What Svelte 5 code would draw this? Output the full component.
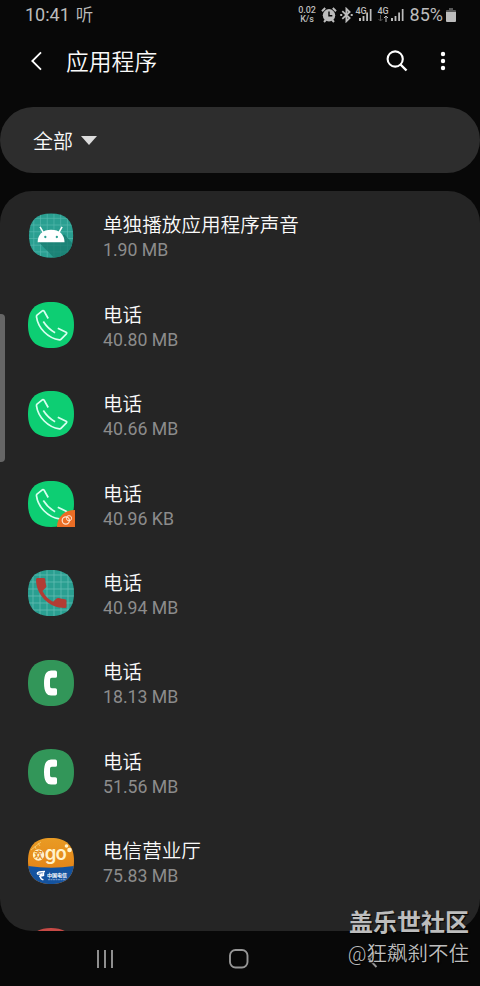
<script>
    const apps = [
        { name: '单独播放应用程序声音', size: '1.90 MB', icon: 'android' },
        { name: '电话', size: '40.80 MB', icon: 'phone' },
        { name: '电话', size: '40.66 MB', icon: 'phone' },
        { name: '电话', size: '40.96 KB', icon: 'phone-badge' },
        { name: '电话', size: '40.94 MB', icon: 'phone-grid' },
        { name: '电话', size: '18.13 MB', icon: 'handset' },
        { name: '电话', size: '51.56 MB', icon: 'handset' },
        { name: '电信营业厅', size: '75.83 MB', icon: 'telecom' },
        { name: '中国银行', size: '', icon: 'red' }
    ];

    const squircle = 'M23 0C38.5 0 46 7.5 46 23S38.5 46 23 46 0 38.5 0 23 7.5 0 23 0Z';
    const gridLines = [5, 12, 19, 26, 33, 40];
</script>

<svelte:head>
    <title>应用程序</title>
</svelte:head>

{#snippet signal()}
    <svg class="signal" width="13" height="13" viewBox="0 0 13 13">
        <path d="M0 10h2v3H0zM3.6 8h1.8v5H3.6zM7.2 4.5H9V13H7.2zM10.8 1h1.7v12h-1.7z" fill="#bcbcbc" />
    </svg>
{/snippet}

<div class="screen">
    <div class="status">
        <span class="time">10:41</span>
        <span class="listen">听</span>
        <div class="status-right">
            <div class="speed"><span>0.02</span><span>K/s</span></div>
            <svg class="alarm" width="16" height="16" viewBox="0 0 16 16">
                <circle cx="8" cy="8.3" r="6.2" fill="#bcbcbc" />
                <path d="M1 4.2 4.2 1M15 4.2 11.8 1M3 15l1.8-2M13 15l-1.8-2" stroke="#bcbcbc" stroke-width="2" />
                <path d="M8 4.5v4.2h3.3" fill="none" stroke="#080808" stroke-width="1.4" />
            </svg>
            <svg class="bluetooth" width="13" height="16" viewBox="0 0 13 16">
                <path d="M2.3 4.2 9.6 11 6.4 14.2V1.8L9.6 5 2.3 11.8" fill="none" stroke="#bcbcbc" stroke-width="1.8" />
                <path d="M.2 7h2v2h-2zM10.7 7h2v2h-2z" fill="#bcbcbc" />
            </svg>
            <div class="network">
                <span class="gen">4G</span>
                {@render signal()}
            </div>
            <div class="network second">
                <div class="data">
                    <span class="gen">4G</span>
                    <svg width="11" height="7" viewBox="0 0 11 7">
                        <path d="M2.5 0v6M.5 4l2 2 2-2" fill="none" stroke="#555" />
                        <path d="M8 7V1M6 3l2-2 2 2" fill="none" stroke="#bcbcbc" />
                    </svg>
                </div>
                {@render signal()}
            </div>
            <span class="percent">85%</span>
            <svg class="battery" width="10" height="14" viewBox="0 0 10 14">
                <path d="M3 0h4v2h2q1 0 1 1v2H0V3q0-1 1-1h2z" fill="#585858" />
                <path d="M0 4h10v9q0 1-1 1H1q-1 0-1-1z" fill="#bcbcbc" />
            </svg>
        </div>
    </div>

    <header>
        <svg class="back" width="12" height="20" viewBox="0 0 12 20">
            <path d="M11 1.3 2.3 10l8.7 8.7" fill="none" stroke="#fff" stroke-width="1.8" />
        </svg>
        <h1>应用程序</h1>
        <svg class="search" width="22" height="22" viewBox="0 0 22 22">
            <circle cx="9.2" cy="9" r="7.6" fill="none" stroke="#fff" stroke-width="2.1" />
            <path d="m14.5 14.5 6 6" stroke="#fff" stroke-width="2.4" />
        </svg>
        <svg class="more" width="6" height="20" viewBox="0 0 6 20">
            <circle cx="3" cy="3" r="2.2" fill="#fff" />
            <circle cx="3" cy="10" r="2.2" fill="#fff" />
            <circle cx="3" cy="17" r="2.2" fill="#fff" />
        </svg>
    </header>

    <div class="filter">
        <span>全部</span>
        <svg width="16" height="9" viewBox="0 0 16 9"><path d="M0 0h16L8 9z" fill="#dcdcdc" /></svg>
    </div>

    <main>
        {#each apps as app}
            <div class="row">
                <svg class="icon" width="48" height="46" viewBox="0 0 48 46">
                    {#if app.icon === 'android'}
                        <g transform="translate(1 .5) scale(.96)">
                            <path d={squircle} fill="#2a9f91" />
                            <clipPath id="android-clip"><path d={squircle} /></clipPath>
                            <g clip-path="url(#android-clip)">
                                {#each gridLines as n}
                                    <path d="M{n} 0v46M0 {n}h46" stroke="#57b9ae" stroke-width=".7" />
                                {/each}
                                <path d="M9 29 26 46h20V32L37 22z" fill="#17796d" opacity=".75" />
                            </g>
                            <path d="M9 30c0-8 5.3-13 14-13s14 5 14 13z" fill="#fff" />
                            <path d="m15 20-3.5-6M31 20l3.5-6" stroke="#fff" stroke-width="1.6" />
                            <circle cx="17" cy="24.5" r="1.2" fill="#2a9f91" />
                            <circle cx="29" cy="24.5" r="1.2" fill="#2a9f91" />
                        </g>
                    {:else if app.icon === 'phone' || app.icon === 'phone-badge'}
                        <path d={squircle} fill="#0dce73" />
                        <path
                            d="M20.2 16.5 16 9q-.7-.8-1.7-.2L9 13.2q-.6.6-.5 1.600C10 26 20 36.5 31.5 37.8q1 .1 1.700-.6l5.200-5.400q.8-1-.3-1.600l-8.300-4M15.300 19.500c3 4.700 6.800 8.500 11.800 11.200"
                            fill="none"
                            stroke="#d8fff0"
                            stroke-width="1.7"
                            stroke-linejoin="round"
                        />
                        {#if app.icon === 'phone-badge'}
                            <path d="M47 29v17H29c0-9.5 7-17 18-17z" fill="#ea6d25" />
                            <circle cx="37.8" cy="39.5" r="3.6" fill="none" stroke="#ffe5cf" stroke-width="1.2" />
                            <circle cx="41" cy="37.2" r="2.6" fill="none" stroke="#ffe5cf" />
                        {/if}
                    {:else if app.icon === 'phone-grid'}
                        <path d={squircle} fill="#2a9f91" />
                        <clipPath id="grid-clip"><path d={squircle} /></clipPath>
                        <g clip-path="url(#grid-clip)">
                            {#each gridLines as n}
                                <path d="M{n} 0v46M0 {n}h46" stroke="#62bdb3" stroke-width=".8" />
                            {/each}
                        </g>
                        <path
                            d="M9.5 8H16q1.2 0 1.3 1.5.1 3.5 1 6.2.3 1-.5 1.700L14.500 21c2.600 5 6 8.500 10.500 10.800l3.600-3.300q.8-.7 1.800-.4 3.500 1 6.600 1.100 1.500.1 1.500 1.500v5.800q0 1.500-1.500 1.500C20.500 38 8 24.500 8 9.500 8 8 9.500 8 9.500 8z"
                            fill="#b23c34"
                        />
                    {:else if app.icon === 'handset'}
                        <path d={squircle} fill="#329659" />
                        <path
                            d="M23 10.5h4.300q1.700 0 1.700 1.700v4q0 1.600-1.700 1.600h-3.500q-1.800 0-1.800 2v6.400q0 2 1.800 2h3.500q1.700 0 1.700 1.600v4q0 1.700-1.700 1.700H23q-3.300 0-4.900-2.500-2.100-3.300-2.100-10t2.100-10q1.600-2.500 4.900-2.500z"
                            fill="#fff"
                        />
                    {:else if app.icon === 'telecom'}
                        <linearGradient id="orange" x2="0" y2="1">
                            <stop stop-color="#e99b24" />
                            <stop offset="1" stop-color="#e37b12" />
                        </linearGradient>
                        <clipPath id="telecom-clip"><path d={squircle} /></clipPath>
                        <g clip-path="url(#telecom-clip)">
                            <path d="M0 0h46v46H0z" fill="url(#orange)" />
                            <path d="M0 28q23 3.5 46 0v18H0z" fill="#14539f" />
                            <path d="m3 12 10-8M7 8l1 3M10 5l2 3" stroke="#f5cf76" stroke-width=".8" />
                        </g>
                        <circle cx="10.5" cy="17" r="5.7" fill="#fff2cb" />
                        <text class="huan" x="6.2" y="20.2">欢</text>
                        <text class="go" x="16.7" y="22.3">go</text>
                        <circle cx="38.5" cy="8" r="1.8" fill="#fff2cb" />
                        <circle cx="41.5" cy="12" r="2.3" fill="#fff2cb" />
                        <path
                            d="M17 33.5c-5 0-8 .8-7.700 2 .2 1 3 .7 5.200.1-3 2-2.500 5.900 1 6M15.500 34v3.500l-4.500 1"
                            fill="none"
                            stroke="#fff"
                            stroke-width="1.4"
                        />
                        <text class="telecom-name" x="19" y="39.3">中国电信</text>
                        <path d="M20 41.7h18" stroke="#9fbde0" stroke-width=".8" stroke-dasharray="2 .5" />
                    {:else}
                        <path d={squircle} fill="#c74a46" />
                    {/if}
                </svg>
                <div class="info">
                    <span class="name">{app.name}</span>
                    <span class="size">{app.size}</span>
                </div>
            </div>
        {/each}
    </main>

    <nav>
        <svg class="recents" width="18" height="18" viewBox="0 0 18 18">
            <path d="M2 0v18M9 0v18M16 0v18" stroke="#969696" stroke-width="1.9" />
        </svg>
        <svg class="home" width="20" height="20" viewBox="0 0 20 20">
            <rect x="1" y="1" width="17.5" height="17.5" rx="5.5" fill="none" stroke="#969696" stroke-width="1.9" />
        </svg>
        <svg class="nav-back" width="12" height="18" viewBox="0 0 12 18">
            <path d="M9.5 1 1.8 9l7.7 8" fill="none" stroke="#969696" stroke-width="1.9" />
        </svg>
    </nav>

    <div class="edge-handle"></div>
    <div class="watermark">
        <strong>盖乐世社区</strong>
        <span>@狂飙刹不住</span>
    </div>
</div>

<style>
    :global(body) {
        background: #080808;
    }

    .screen {
        position: relative;
        width: 480px;
        height: 986px;
        overflow: hidden;
        display: flex;
        flex-direction: column;
        background: #080808;
        color: #fafafa;
        font-family: Roboto, 'Noto Sans CJK SC', sans-serif;
    }

    svg {
        display: block;
        flex: none;
    }

    .status {
        height: 30px;
        flex: none;
        display: flex;
        align-items: center;
        padding: 0 24px 0 25px;
        color: #bcbcbc;
        font-size: 18px;
        line-height: 30px;
    }

    .listen {
        margin-left: 6px;
        font-size: 17.5px;
        font-weight: 350;
    }

    .status-right {
        display: flex;
        align-items: center;
        margin-left: auto;
    }

    .speed {
        display: flex;
        flex-direction: column;
        align-items: center;
        width: 19px;
        margin-right: 4px;
        font-size: 9px;
        line-height: 9px;
        font-weight: 500;
    }

    .speed span {
        height: 9px;
    }

    .bluetooth {
        margin: 0 3px;
    }

    .network {
        display: flex;
        align-items: flex-start;
        height: 14px;
        margin-right: 6px;
    }

    .network .signal {
        margin-left: -8px;
    }

    .gen {
        display: block;
        width: 11px;
        font-size: 9px;
        line-height: 7px;
        font-weight: 500;
        letter-spacing: -0.3px;
    }

    .network.second .signal {
        margin-left: 2px;
    }

    .percent {
        margin-right: 3px;
        font-size: 18px;
    }

    header {
        height: 77px;
        flex: none;
        display: flex;
        align-items: center;
        box-sizing: border-box;
        padding: 0 34px 15px 30px;
    }

    h1 {
        margin: 4px 0 0 24px;
        font-size: 22.8px;
        font-weight: 350;
        line-height: 30px;
    }

    .search {
        margin-left: auto;
        margin-right: 32px;
    }

    .filter {
        height: 66px;
        flex: none;
        display: flex;
        align-items: center;
        gap: 8px;
        box-sizing: border-box;
        padding-left: 33px;
        border-radius: 33px;
        background: #2d2d2d;
        font-size: 20px;
        font-weight: 350;
    }

    main {
        height: 740px;
        flex: none;
        overflow: hidden;
        margin-top: 18px;
        border-radius: 32px;
        background: #252525;
    }

    .row {
        display: flex;
        align-items: center;
        height: 89.4px;
        padding-left: 28px;
    }

    .icon {
        overflow: visible;
    }

    .info {
        display: flex;
        flex-direction: column;
        margin: 4.6px 0 0 27px;
    }

    .name {
        height: 25px;
        line-height: 27px;
        white-space: nowrap;
        font-size: 19.6px;
        font-weight: 350;
    }

    .size {
        height: 26px;
        line-height: 26px;
        white-space: nowrap;
        color: #8c8c8c;
        font-size: 17.7px;
    }

    .huan {
        fill: #e08a18;
        font-size: 8.6px;
        font-weight: 700;
    }

    .go {
        fill: #fff2cb;
        font-family: Inter, sans-serif;
        font-size: 18.5px;
        font-weight: 600;
        letter-spacing: -0.8px;
    }

    .telecom-name {
        fill: #fff;
        font-size: 5px;
        font-weight: 700;
    }

    nav {
        flex: 1;
        display: flex;
        align-items: center;
        padding-left: 96px;
    }

    .home {
        margin-left: 115px;
    }

    .nav-back {
        margin-left: 118px;
    }

    .edge-handle {
        position: absolute;
        left: 0;
        top: 314px;
        width: 5px;
        height: 148px;
        border-radius: 0 4px 4px 0;
        background: #666;
    }

    .watermark {
        position: absolute;
        right: 11px;
        bottom: 16px;
        display: flex;
        flex-direction: column;
        align-items: flex-end;
        color: #bdbdbd;
        text-shadow: 1px 1px 1px #000;
    }

    .watermark strong {
        font-size: 24px;
        font-weight: 700;
        line-height: 31px;
    }

    .watermark span {
        font-size: 20.5px;
        font-weight: 350;
        line-height: 31px;
    }
</style>
